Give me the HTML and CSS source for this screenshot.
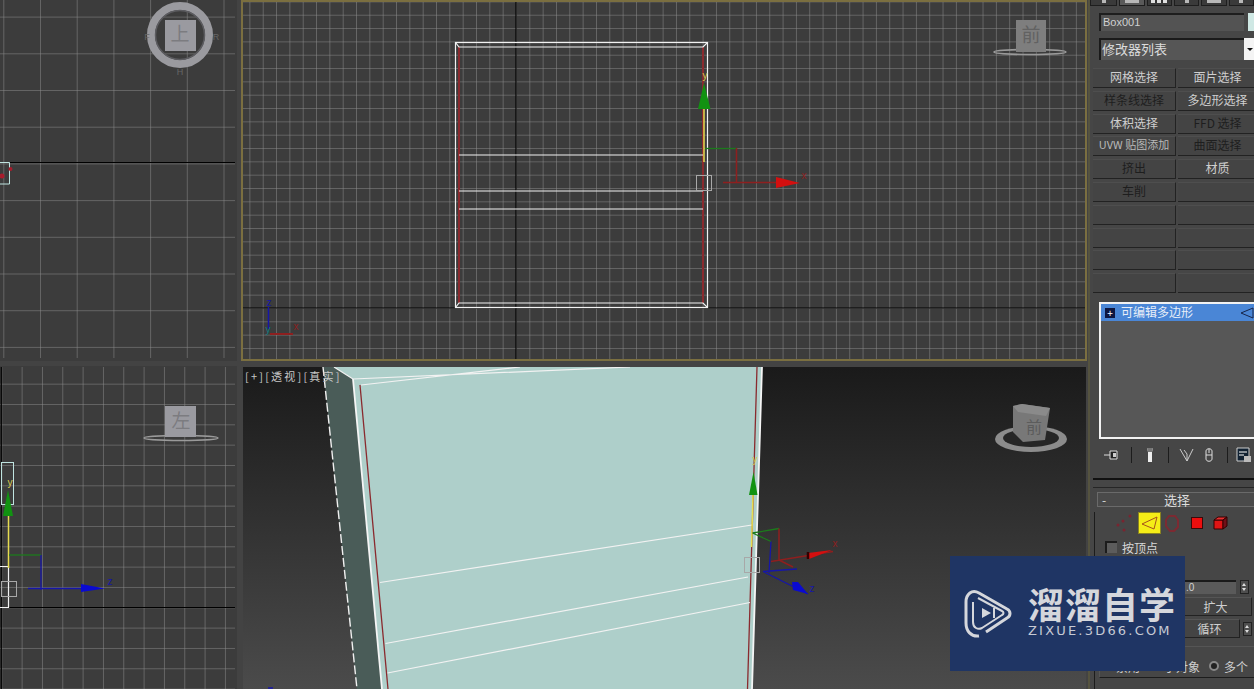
FILE: index.html
```html
<!DOCTYPE html>
<html lang="zh-CN">
<head>
  <meta charset="UTF-8">
  <title>3ds Max 视口</title>
  <link rel="stylesheet" href="styles.css">
</head>
<body>
  <div class="workspace">

    <!-- 顶视口 -->
    <div class="cell">
      <svg class="view" viewBox="0 0 237 361">
        <defs>
          <pattern id="grid-top" x="3.3" y="16.6" width="36.7" height="36.7" patternUnits="userSpaceOnUse">
            <path d="M0 0H36.7M0 0V36.7" class="grid-line"/>
          </pattern>
        </defs>
        <rect width="237" height="361" class="view-bg"/>
        <rect x="0" y="0" width="235" height="358" fill="url(#grid-top)"/>
        <path d="M10 162.5H235" class="axis"/>
        <circle cx="180" cy="35" r="29" class="ring"/>
        <circle cx="180" cy="35" r="24.500" fill="none" stroke="#5c5c60" stroke-width="1.500"/>
        <rect x="165" y="20" width="31" height="31" class="cube-face"/>
        <text x="180" y="41" class="cube-label">上</text>
        <text x="147" y="40" class="cube-side">F</text>
        <text x="216" y="40" class="cube-side">R</text>
        <text x="180" y="75" class="cube-side">H</text>
        <path d="M0 162.5H9.5V184H0" class="sel-box"/>
        <circle cx="10.5" cy="169" r="2" fill="#a81c2c"/>
        <circle cx="2" cy="176" r="2.5" fill="#a81c2c"/>
      </svg>
    </div>

    <!-- 前视口，当前激活 -->
    <div class="cell">
      <div class="active-frame">
        <svg class="view" viewBox="243 2 842 357">
          <defs>
            <pattern id="grid-front" x="516" y="308" width="13.33" height="13.33" patternUnits="userSpaceOnUse">
              <path d="M0 0H13.33M0 0V13.33" class="grid-line"/>
            </pattern>
          </defs>
          <rect x="243" y="2" width="842" height="357" class="view-bg"/>
          <rect x="243" y="2" width="842" height="357" fill="url(#grid-front)"/>
          <path d="M516 2V359M243 308H1085" class="axis"/>

          <path d="M459 47V303M703 47V303" class="edge-red"/>
          <rect x="455.5" y="42.5" width="252" height="265" class="edge-white"/>
          <path d="M455.5 42.5L459 47H703L707.5 42.5M455.5 307.5L459 303H703L707.5 307.5" class="edge-white"/>
          <path d="M459 155H703M459 191H703M459 209H703" class="edge-white"/>

          <rect x="696.5" y="175.5" width="15" height="15" class="gizmo-box"/>
          <path d="M704 109V162" class="gizmo-y"/>
          <path d="M704 83L710.5 109H698Z" fill="#119211"/>
          <text x="705" y="79" class="axis-label yellow">y</text>
          <path d="M705 148.5H737" class="gizmo-g"/>
          <path d="M736.5 148V183M723 182.5H778" class="gizmo-r"/>
          <path d="M776 177L800 183L776 188Z" fill="#d40f0f"/>
          <text x="804" y="179" class="axis-label dark-red">x</text>

          <path d="M268.500 307V329" stroke="#1616a8" stroke-width="1.500"/>
          <path d="M270 334H293" stroke="#8e1f1f" stroke-width="2"/>
          <text x="269" y="306" class="axis-label blue">z</text>
          <text x="268" y="333" class="axis-label teal">y</text>
          <text x="296" y="330" class="axis-label dark-red">x</text>

          <ellipse cx="1030" cy="52" rx="36" ry="2.500" class="flat-ring"/>
          <rect x="1016" y="20" width="30" height="32" class="cube-face dim"/>
          <text x="1031" y="42" class="cube-label deep">前</text>
        </svg>
      </div>
    </div>

    <!-- 命令面板 -->
    <aside class="panel">
      <div class="tabs">
        <span class="tab tab-s"><i class="tab-mark"></i></span>
        <span class="tab tab-on"><i class="tab-mark wide"></i></span>
        <span class="tab tab-m"><i class="tab-mark bars"></i></span>
        <span class="tab tab-m"><i class="tab-mark"></i></span>
        <span class="tab tab-m"><i class="tab-mark wide"></i></span>
        <span class="tab tab-m"><i class="tab-mark"></i></span>
      </div>

      <div class="name-row">
        <span class="name-field">Box001</span>
        <span class="swatch"></span>
      </div>

      <div class="mod-list">
        <span>修改器列表</span>
        <span class="mod-arrow"></span>
      </div>

      <div class="mod-buttons">
        <button class="mod-btn">网格选择</button>
        <button class="mod-btn">面片选择</button>
        <button class="mod-btn off">样条线选择</button>
        <button class="mod-btn">多边形选择</button>
        <button class="mod-btn">体积选择</button>
        <button class="mod-btn off">FFD 选择</button>
        <button class="mod-btn small">UVW 贴图添加</button>
        <button class="mod-btn off">曲面选择</button>
        <button class="mod-btn off">挤出</button>
        <button class="mod-btn">材质</button>
        <button class="mod-btn off">车削</button>
        <button class="mod-btn"></button>
        <button class="mod-btn"></button>
        <button class="mod-btn"></button>
        <button class="mod-btn"></button>
        <button class="mod-btn"></button>
        <button class="mod-btn"></button>
        <button class="mod-btn"></button>
        <button class="mod-btn"></button>
        <button class="mod-btn"></button>
      </div>

      <div class="stack">
        <div class="stack-row">
          <span class="plus">+</span>
          <span class="stack-name">可编辑多边形</span>
          <svg class="stack-icon" width="14" height="12" viewBox="0 0 14 12">
            <path d="M1 6L13 1V11Z" fill="none" stroke="#16254a"/>
          </svg>
        </div>
      </div>

      <div class="stack-tools">
        <svg width="18" height="16" viewBox="0 0 18 16" class="t1">
          <path d="M1 8H7" stroke="#ddd"/><path d="M7 4H14V12H7Z" fill="#222" stroke="#ddd"/><path d="M10 6H13V10H10Z" fill="#ccc"/>
        </svg>
        <i class="tool-sep"></i>
        <svg width="10" height="16" viewBox="0 0 10 16" class="t2">
          <path d="M2 1H8L7 5V15H3V5Z" fill="#eee"/><path d="M2 1H8L7 5H3Z" fill="#777"/>
        </svg>
        <i class="tool-sep"></i>
        <svg width="16" height="16" viewBox="0 0 16 16" class="t3">
          <path d="M1 2L8 14L14 2M8 14V7L5 3" fill="none" stroke="#ccc"/>
        </svg>
        <svg width="12" height="16" viewBox="0 0 12 16" class="t4">
          <path d="M3 4C3 1 9 1 9 4V12C9 15 3 15 3 12ZM3 8H9M6 2V6" fill="none" stroke="#ddd"/>
        </svg>
        <i class="tool-sep"></i>
        <svg width="16" height="16" viewBox="0 0 16 16" class="t5">
          <path d="M1 1H13V14H1Z" fill="#123" stroke="#ccc"/><path d="M3 5H11M3 8H8" stroke="#fff"/><path d="M8 9H15V15H8Z" fill="#bbb"/>
        </svg>
      </div>

      <div class="rule-thick"></div>
      <div class="rule-thin"></div>

      <section class="rollout">
        <header class="rollout-head"><span class="minus">-</span><span class="rollout-title">选择</span></header>
        <div class="rollout-body">
          <div class="sub-icons">
            <svg width="20" height="20" viewBox="0 0 20 20" class="sub-vertex">
              <g fill="#7a2430"><circle cx="3" cy="12" r="1.500"/><circle cx="8" cy="8" r="1.500"/><circle cx="15" cy="3" r="1.500"/><circle cx="9" cy="17" r="1.500"/></g>
            </svg>
            <span class="sub-on">
              <svg width="18" height="14" viewBox="0 0 18 14"><path d="M1 8L16 1L13 13Z" fill="none" stroke="#a6521c"/></svg>
            </span>
            <svg width="14" height="18" viewBox="0 0 14 18" class="sub-border">
              <path d="M4 2H10L13 6V13L9 17H5L1 12V6Z" fill="none" stroke="#7c2a32" stroke-width="2"/>
            </svg>
            <span class="sub-poly"></span>
            <svg width="15" height="14" viewBox="0 0 15 14" class="sub-cube">
              <path d="M1 4H10V13H1Z" fill="#e01414" stroke="#300"/><path d="M1 4L5 1H14L10 4Z" fill="#e63030" stroke="#300"/><path d="M10 4L14 1V10L10 13Z" fill="#701018" stroke="#300"/>
            </svg>
          </div>
          <label class="check-row"><span class="check"></span>按顶点</label>
          <div class="spin-row">
            <span class="spin-field">.0</span>
            <span class="spinner"></span>
          </div>
          <div class="grow-row"><button class="small-btn">扩大</button></div>
          <div class="loop-row"><button class="small-btn loop">循环</button><span class="spinner"></span></div>
          <div class="preview-box">
            <span class="opt-a">禁用</span>
            <span class="opt-b">子对象</span>
            <span class="radio"></span>
            <span>多个</span>
          </div>
        </div>
      </section>
    </aside>

    <!-- 左视口 -->
    <div class="cell cell-low">
      <svg class="view" viewBox="0 366 237 323">
        <defs>
          <pattern id="grid-left" x="1.3" y="607.3" width="20.33" height="20.33" patternUnits="userSpaceOnUse">
            <path d="M0 0H20.33M0 0V20.33" class="grid-line"/>
          </pattern>
        </defs>
        <rect x="0" y="366" width="237" height="323" class="view-bg"/>
        <rect x="0" y="367" width="235" height="322" fill="url(#grid-left)"/>
        <path d="M1.300 367V689M0 607.5H235" class="axis"/>
        <rect x="1.500" y="462.500" width="12" height="42" class="sel-box"/>
        <path d="M0 566.500H8.500V607.500H0" class="edge-white"/>
        <rect x="1.500" y="581.500" width="15" height="15" class="gizmo-box"/>
        <path d="M8.500 516V568" class="gizmo-y"/>
        <path d="M8 490L13 516H3Z" fill="#119211"/>
        <text x="10" y="486" class="axis-label yellow">y</text>
        <path d="M9 555H41" class="gizmo-g"/>
        <path d="M41 555V590M28 588.500H82" class="gizmo-b"/>
        <path d="M81 584L105 588.500L81 592Z" fill="#0a0ad0"/>
        <text x="110" y="585" class="axis-label blue">z</text>
        <ellipse cx="181" cy="438" rx="37" ry="2.500" class="flat-ring"/>
        <rect x="165" y="406" width="31" height="31" class="cube-face"/>
        <text x="181" y="428" class="cube-label">左</text>
      </svg>
    </div>

    <!-- 透视视口 -->
    <div class="cell persp-cell">
      <svg class="view" viewBox="243 367 843 322">
        <defs>
          <linearGradient id="persp-bg" x1="0" y1="0" x2="0" y2="1">
            <stop offset="0" stop-color="#1a1a1a"/>
            <stop offset="1" stop-color="#4b4b4b"/>
          </linearGradient>
        </defs>
        <rect x="243" y="367" width="843" height="322" fill="url(#persp-bg)"/>
        <path d="M323 367H334L353 379L382 689H357Z" fill="#4a5c58"/>
        <path d="M334 367H762L752 689H382L353 379Z" fill="#aecfca"/>
        <path d="M334 367L353 379M353 379L630 367M361 385L520 367" class="edge-white"/>
        <path d="M323 367L357 689" class="edge-dash"/>
        <path d="M353 379L382 689" class="edge-white-b"/>
        <path d="M762 367L752 689" class="edge-white-b"/>
        <path d="M360 385L388 689M757 367L747.500 689" class="edge-red-p"/>
        <path d="M380 582.500L752 525M385.500 643.500L748 577M387.500 673L750 602.500" class="edge-white"/>

        <rect x="744.500" y="557.500" width="15" height="15" class="gizmo-box"/>
        <path d="M753 495L751.500 547" class="gizmo-y"/>
        <path d="M753.500 472L757.500 495H749Z" fill="#119211"/>
        <text x="755" y="463" class="axis-label yellow">y</text>
        <path d="M752.500 533L779 528.500M752.500 533L771 541.500" class="gizmo-g"/>
        <path d="M779 528.500V560M771 561.500L833 551.500M779 560L793 567" class="gizmo-r"/>
        <path d="M808 553L832 550L809 559Z" fill="#d40f0f"/>
        <path d="M808 552V559" stroke="#300" stroke-width="2.500"/>
        <text x="835" y="547" class="axis-label dark-red">x</text>
        <path d="M771 541.500L769 573M763 571.500L797 569M763 571.500L808 594" class="gizmo-b"/>
        <path d="M792 582L798 582L808 594L793 590Z" fill="#0a0ad0"/>
        <text x="812" y="592" class="axis-label blue">z</text>

        <ellipse cx="1031" cy="439" rx="36" ry="13" fill="#8c8c8c"/>
        <ellipse cx="1031" cy="438" rx="28" ry="9" fill="#262626"/>
        <path d="M1013 406L1022 404L1050 408L1045 440L1023 442L1013 432Z" fill="#787878"/>
        <path d="M1013 406L1018 412L1046 416L1050 408L1022 404Z" fill="#8a8a8a"/>
        <text x="1034" y="433" class="cube-label small">前</text>
        <path d="M268 688H273" stroke="#1616a8" stroke-width="1.500"/>
      </svg>
      <div class="view-label">[+][透视][真实]</div>
    </div>

  </div>

  <!-- 水印 -->
  <div class="watermark">
    <svg class="wm-logo" width="48" height="48" viewBox="0 0 48 48">
      <path d="M15 46C7 47 2 41 2 33V12C2 4 8 -1 15 3L43 19C47 21 47 26 43 28L22 42" fill="none" stroke="#d5d7dc" stroke-width="3"/>
      <path d="M9 12V32C9 38 14 40 18 38L38 25C40 24 40 22 38 21L14 8" fill="none" stroke="#d5d7dc" stroke-width="2"/>
      <path d="M18 18L27 23L18 28Z" fill="#d5d7dc"/>
      <path d="M30 18V28" stroke="#d5d7dc" stroke-width="2"/>
    </svg>
    <div class="wm-text">
      <div class="wm-name">溜溜自学</div>
      <div class="wm-url">ZIXUE.3D66.COM</div>
    </div>
  </div>
</body>
</html>
```

FILE: styles.css
```css
* {
  box-sizing: border-box;
  margin: 0;
}

html, body {
  width: 1254px;
  height: 689px;
  overflow: hidden;
}

body {
  position: relative;
  background-color: #434343;
  font-family: "Noto Sans CJK SC", "Liberation Sans", sans-serif;
  font-size: 12px;
  color: #d2d2d2;
}

.workspace {
  display: grid;
  grid-template-columns: 241px 847px 166px;
  grid-template-rows: 366px 323px;
  width: 1254px;
  height: 689px;
}

.cell {
  padding-right: 4px;
  padding-bottom: 5px;
}

.cell:nth-child(2) {
  padding-right: 1px;
}

.cell-low {
  padding-bottom: 0;
}

.persp-cell {
  position: relative;
  padding: 1px 2px 0 2px;
}

.view {
  display: block;
  width: 100%;
  height: 100%;
}

.active-frame {
  height: 100%;
  border: 2px solid #7b6f40;
}

/* viewport drawing */
.view-bg { fill: #3c3c3c; }
.grid-line { fill: none; stroke: #8c8c8c; stroke-width: 1; }
.axis { fill: none; stroke: #000; stroke-width: 1.2; }
.edge-white { fill: none; stroke: #f2f2f2; stroke-width: 1.2; }
.edge-white-b { fill: none; stroke: #f5f5f5; stroke-width: 1.8; }
.edge-dash { fill: none; stroke: #f0f0f0; stroke-width: 1.4; stroke-dasharray: 9 3; }
.edge-red { fill: none; stroke: #8a2a2e; stroke-width: 2; }
.edge-red-p { fill: none; stroke: #8a2a2e; stroke-width: 1.3; }
.sel-box { fill: none; stroke: #bfe4e0; stroke-width: 1; }
.gizmo-box { fill: none; stroke: #a8a8a8; stroke-width: 1; }
.gizmo-y { fill: none; stroke: #e6dc50; stroke-width: 1.5; }
.gizmo-g { fill: none; stroke: #1c7a1c; stroke-width: 1.3; }
.gizmo-r { fill: none; stroke: #8e1f1f; stroke-width: 1.5; }
.gizmo-b { fill: none; stroke: #1616a8; stroke-width: 1.3; }
.axis-label { font-family: "Liberation Sans", sans-serif; font-size: 10px; text-anchor: middle; }
.yellow { fill: #d8cc50; }
.dark-red { fill: #8e1f1f; }
.blue { fill: #1616a8; }
.teal { fill: #127a80; }
.ring { fill: none; stroke: #9a9a9f; stroke-width: 8; }
.cube-face { fill: #9a9aa0; }
.cube-face.dim { fill: #7e7e7e; }
.flat-ring { fill: none; stroke: #9a9a9a; stroke-width: 1.5; }
.cube-label { font-size: 19px; text-anchor: middle; fill: #7c7c80; }
.cube-label.deep { fill: #626262; }
.cube-label.small { font-size: 16px; fill: #5c5c5c; }
.cube-side { font-size: 9px; text-anchor: middle; fill: #666; font-family: "Liberation Sans", sans-serif; }

.view-label {
  position: absolute;
  left: 4px;
  top: 2px;
  font-size: 11px;
  line-height: 17px;
  letter-spacing: 2.2px;
  white-space: nowrap;
  color: #c8c8c8;
}

/* command panel */
.panel {
  grid-column: 3;
  grid-row: 1 / 3;
  overflow: hidden;
  background-color: #464646;
  border-left: 2px solid #55533f;
}

.tabs {
  display: flex;
  gap: 2px;
  height: 6px;
}

.tab {
  display: flex;
  justify-content: center;
  background-color: #3a3a3a;
  border: 1px solid #1e1e1e;
  border-top: none;
}

.tab-s { width: 28px; }
.tab-m { width: 26px; }
.tab-on { width: 26px; background-color: #5a5a5a; }

.tab-mark {
  width: 4px;
  height: 3px;
  background-color: #b8b8b8;
}

.tab-mark.wide { width: 14px; }
.tab-mark.bars {
  width: 16px;
  background: repeating-linear-gradient(90deg, #e0e0e0 0 4px, #333 4px 6px);
}

.name-row {
  display: flex;
  gap: 4px;
  margin: 7px 0 0 9px;
  height: 18px;
}

.name-field {
  width: 145px;
  padding-left: 2px;
  background-color: #535353;
  border-top: 2px solid #1e1e1e;
  border-left: 2px solid #1e1e1e;
  font-family: "Liberation Sans", sans-serif;
  font-size: 11px;
  line-height: 15px;
  color: #d0d0d0;
  flex-shrink: 0;
}

.swatch {
  width: 20px;
  background-color: #cfe8e4;
  flex-shrink: 0;
}

.mod-list {
  display: flex;
  justify-content: space-between;
  margin: 7px 0 0 9px;
  height: 22px;
  padding-left: 1px;
  background-color: #565656;
  border-top: 2px solid #1a1a1a;
  border-left: 2px solid #1a1a1a;
  font-size: 13px;
  line-height: 18px;
  color: #dcdcdc;
}

.mod-arrow {
  position: relative;
  width: 10px;
  margin-top: -2px;
  height: 22px;
  background-color: #f4f4f4;
}

.mod-arrow::after {
  content: "";
  position: absolute;
  left: 3px;
  top: 10px;
  border-left: 3px solid transparent;
  border-right: 3px solid transparent;
  border-top: 3px solid #111;
}

.mod-buttons {
  display: grid;
  grid-template-columns: 83px 80px;
  column-gap: 2px;
  grid-auto-rows: 20px;
  row-gap: 2.8px;
  margin: 8px 0 0 3px;
}

.mod-btn {
  padding: 0 0 3px;
  background-color: #444;
  border: none;
  border-top: 1px solid #4e4e4e;
  border-right: 1px solid #222;
  border-bottom: 1px solid #222;
  font-family: inherit;
  font-size: 12px;
  line-height: 15px;
  color: #cfcfcf;
}

.mod-btn.off { color: #1e1e1e; }
.mod-btn.small { font-size: 11px; color: #b9b9b9; white-space: nowrap; }

.stack {
  margin: 9px 0 0 9px;
  height: 137px;
  background-color: #575757;
  border: 2px solid #f2f2f2;
  border-right: none;
}

.stack-row {
  display: flex;
  align-items: center;
  gap: 6px;
  height: 17px;
  padding-left: 4px;
  background-color: #4a86d6;
  color: #e8eef8;
}

.plus {
  width: 10px;
  height: 10px;
  background-color: #0d1640;
  font-size: 10px;
  line-height: 9px;
  text-align: center;
  color: #fff;
}

.stack-name {
  flex-grow: 1;
  padding-bottom: 2px;
  font-size: 12px;
  line-height: 15px;
}

.stack-tools {
  display: flex;
  align-items: center;
  height: 16px;
  margin-top: 8px;
  padding-left: 13px;
}

.tool-sep {
  width: 1px;
  height: 16px;
  background-color: #1c1c1c;
}

.t1 { margin-right: 10px; }
.t2 { margin: 0 13px; }
.t3 { margin: 0 8px 0 10px; }
.t4 { margin-right: 12px; }
.t5 { margin-left: 8px; }

.rule-thick {
  height: 2px;
  margin: 15px 0 0 3px;
  background-color: #111;
}

.rule-thin {
  height: 1px;
  margin: 7px 0 0 3px;
  background-color: #262626;
}

.rollout {
  margin: 4px 0 0 7px;
}

.rollout-head {
  display: flex;
  height: 15px;
  background-color: #4a4a4a;
  border: 1px solid #6a6a6a;
  border-right: none;
  line-height: 13px;
  color: #dcdcdc;
}

.minus {
  width: 66px;
  padding-left: 4px;
}

.rollout-title {
  font-size: 13px;
}

.rollout-body {
  height: 190px;
  margin-left: -3px;
  padding-left: 10px;
  border-left: 1px solid #1c1c1c;
}

.sub-icons {
  display: flex;
  align-items: center;
  height: 22px;
  margin-top: 5px;
}

.sub-vertex { margin-left: 10px; }

.sub-on {
  display: flex;
  align-items: center;
  justify-content: center;
  width: 23px;
  height: 22px;
  margin-left: 3px;
  background-color: #f5ed17;
  border: 1px solid #8a8420;
}

.sub-border { margin-left: 4px; }

.sub-poly {
  width: 12px;
  height: 12px;
  margin-left: 12px;
  background-color: #ec0e0e;
  border: 1px solid #3a0a0a;
}

.sub-cube { margin-left: 10px; }

.check-row {
  display: flex;
  align-items: center;
  gap: 5px;
  height: 16px;
  margin-top: 5px;
  color: #d8d8d8;
}

.check {
  width: 12px;
  height: 12px;
  background-color: #5c5c5c;
  border-top: 2px solid #1c1c1c;
  border-left: 2px solid #1c1c1c;
}

.spin-row {
  display: flex;
  align-items: center;
  gap: 4px;
  margin: 25px 0 0 74px;
  height: 14px;
}

.spin-field {
  width: 57px;
  height: 14px;
  padding-left: 7px;
  background-color: #5a5a5a;
  border-top: 2px solid #1a1a1a;
  font-family: "Liberation Sans", sans-serif;
  font-size: 10px;
  line-height: 12px;
}

.spinner {
  position: relative;
  display: block;
  width: 9px;
  height: 14px;
  background-color: #4e4e4e;
  border: 1px solid #222;
}

.spinner::before, .spinner::after {
  content: "";
  position: absolute;
  left: 1px;
  border-left: 2.5px solid transparent;
  border-right: 2.5px solid transparent;
}

.spinner::before { top: 2px; border-bottom: 3px solid #ddd; }
.spinner::after { bottom: 2px; border-top: 3px solid #ddd; }

.grow-row {
  margin: 3px 0 0 75px;
}

.loop-row {
  display: flex;
  align-items: center;
  gap: 3px;
  margin: 3px 0 0 75px;
}

.small-btn {
  display: block;
  width: 72px;
  height: 19px;
  padding: 0;
  background-color: #444;
  border: none;
  border-top: 1px solid #555;
  border-right: 1px solid #222;
  border-bottom: 1px solid #222;
  font-family: inherit;
  font-size: 12px;
  line-height: 16px;
  color: #cfcfcf;
}

.small-btn.loop { width: 60px; }

.preview-box {
  display: flex;
  align-items: center;
  height: 32px;
  margin: 8px -4px 0 -6px;
  padding: 8px 0 0 16px;
  border: 1px solid #555;
  border-bottom-color: #1c1c1c;
  color: #cfcfcf;
}

.opt-a { width: 48px; }
.opt-b { width: 45px; }

.radio {
  width: 10px;
  height: 10px;
  margin-right: 5px;
  background-color: #222;
  border: 2px solid #888;
  border-radius: 50%;
}

/* watermark sits over the panel */
.watermark {
  position: absolute;
  left: 950px;
  top: 556px;
  display: flex;
  align-items: flex-start;
  gap: 16px;
  width: 235px;
  height: 115px;
  padding: 33px 0 0 14px;
  background-color: #1f3564;
  color: #d5d7dc;
}

.wm-logo {
  flex-shrink: 0;
  margin-top: 1px;
}

.wm-text {
  margin-top: -6px;
}

.wm-name {
  font-size: 36px;
  font-weight: 700;
  line-height: 40px;
  letter-spacing: 1px;
  white-space: nowrap;
}

.wm-url {
  font-family: "DejaVu Sans", sans-serif;
  font-size: 13px;
  line-height: 16px;
  letter-spacing: 2.2px;
  white-space: nowrap;
  color: #c6cad4;
}
```
